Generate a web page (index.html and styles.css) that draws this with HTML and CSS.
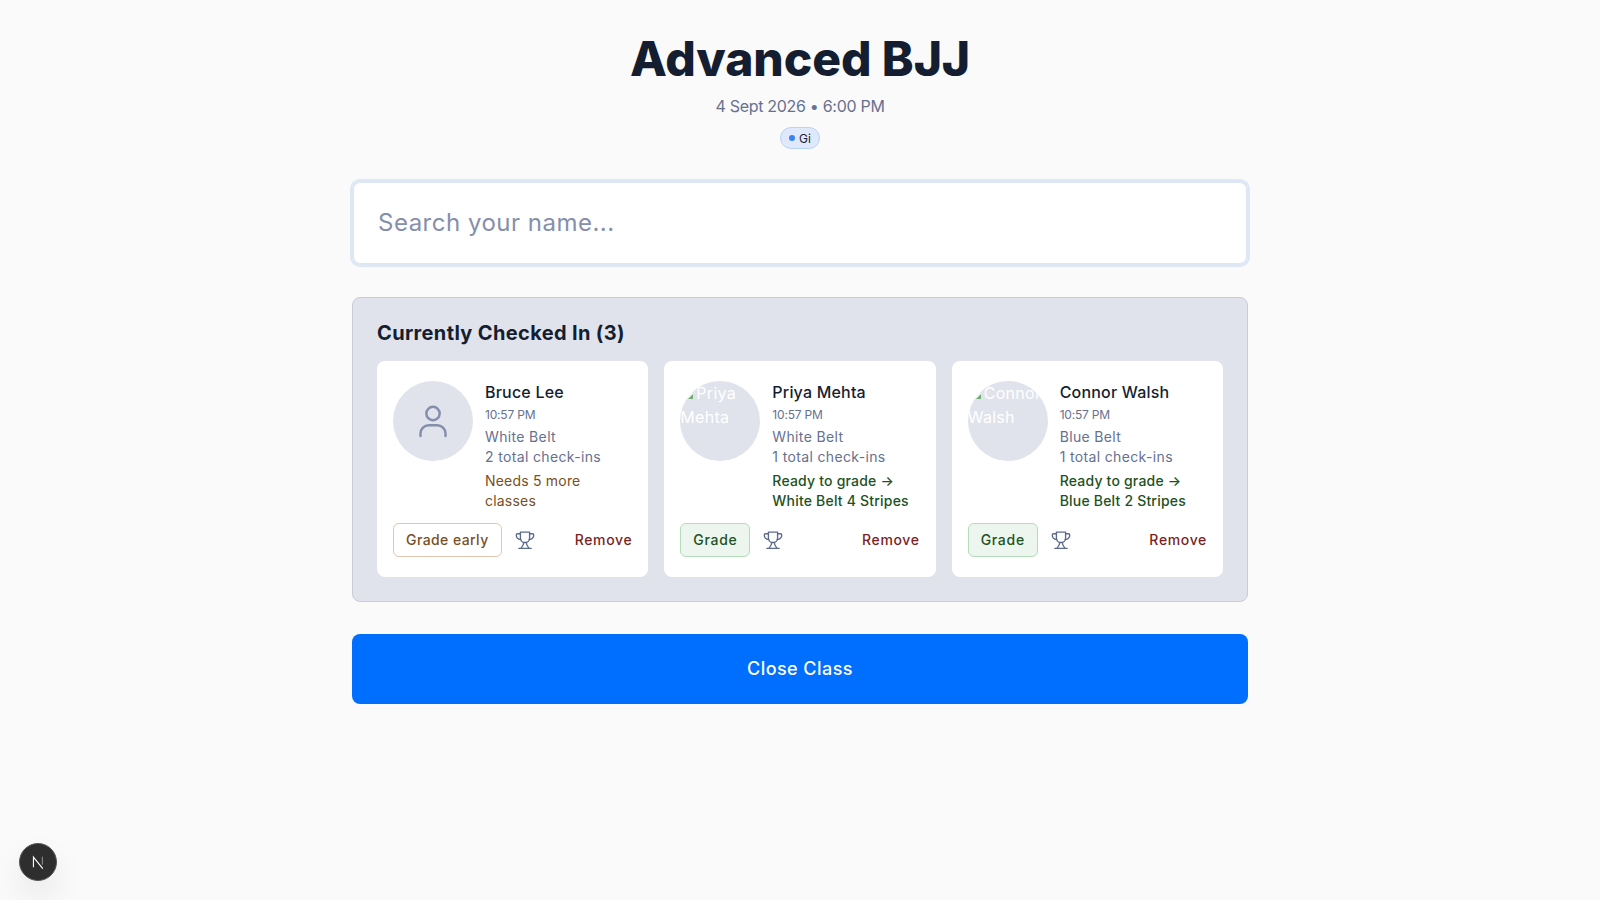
FILE: index.html
```html
<!DOCTYPE html>
<html lang="en">
<head>
<meta charset="utf-8">
<title>Advanced BJJ</title>
<link rel="stylesheet" href="styles.css">
</head>
<body>
<main class="page">
  <header class="head">
    <h1 class="title">Advanced BJJ</h1>
    <p class="sub">4 Sept 2026 • 6:00 PM</p>
    <span class="badge"><i class="dot"></i>Gi</span>
  </header>
  <input class="search" type="text" placeholder="Search your name...">
  <section class="panel">
    <h2 class="panel-title">Currently Checked In (3)</h2>
    <div class="cards">
      <article class="card">
        <div class="top">
          <div class="avatar">
            <svg class="person" viewBox="0 0 24 24" fill="none" stroke="currentColor" stroke-width="1.5" stroke-linecap="round"><circle cx="12" cy="7.5" r="4"/><path d="M4.500 21v-1.500a5 5 0 0 1 5-5h5a5 5 0 0 1 5 5V21"/></svg>
          </div>
          <div class="info">
            <div class="name">Bruce Lee</div>
            <div class="time">10:57 PM</div>
            <div class="meta">White Belt</div>
            <div class="meta">2 total check-ins</div>
            <div class="status needs">Needs 5 more<br>classes</div>
          </div>
        </div>
        <div class="actions">
          <button class="grade early">Grade early</button>
          <svg class="trophy" viewBox="0 0 24 24" fill="none" stroke="currentColor" stroke-width="1.6" stroke-linecap="round" stroke-linejoin="round"><path d="M6.500 2.500h11v7a5.500 5.500 0 0 1-11 0v-7Z"/><path d="M6.500 4.500H3a1.500 1.500 0 0 0-1.500 1.500c0 3 2 5 5.500 5.500M17.500 4.500H21a1.500 1.500 0 0 1 1.500 1.500c0 3-2 5-5.500 5.500"/><path d="M10.500 15c0 2.500-1.500 4.500-3 6.500M13.500 15c0 2.500 1.500 4.500 3 6.500M4.500 22h15"/></svg>
          <button class="remove">Remove</button>
        </div>
      </article>
      <article class="card">
        <div class="top">
          <div class="avatar alt"><svg class="broken" viewBox="0 0 16 16"><path d="M3 3h10v10H3Z" fill="#f4f5f7"/><path d="M13 8v5H8Z" fill="#6fae6f"/></svg>Priya Mehta</div>
          <div class="info">
            <div class="name">Priya Mehta</div>
            <div class="time">10:57 PM</div>
            <div class="meta">White Belt</div>
            <div class="meta">1 total check-ins</div>
            <div class="status ready">Ready to grade →<br>White Belt 4 Stripes</div>
          </div>
        </div>
        <div class="actions">
          <button class="grade">Grade</button>
          <svg class="trophy" viewBox="0 0 24 24" fill="none" stroke="currentColor" stroke-width="1.6" stroke-linecap="round" stroke-linejoin="round"><path d="M6.500 2.500h11v7a5.500 5.500 0 0 1-11 0v-7Z"/><path d="M6.500 4.500H3a1.500 1.500 0 0 0-1.500 1.500c0 3 2 5 5.500 5.500M17.500 4.500H21a1.500 1.500 0 0 1 1.500 1.500c0 3-2 5-5.500 5.500"/><path d="M10.500 15c0 2.500-1.500 4.500-3 6.500M13.500 15c0 2.500 1.500 4.500 3 6.500M4.500 22h15"/></svg>
          <button class="remove">Remove</button>
        </div>
      </article>
      <article class="card">
        <div class="top">
          <div class="avatar alt"><svg class="broken" viewBox="0 0 16 16"><path d="M3 3h10v10H3Z" fill="#f4f5f7"/><path d="M13 8v5H8Z" fill="#6fae6f"/></svg>Connor Walsh</div>
          <div class="info">
            <div class="name">Connor Walsh</div>
            <div class="time">10:57 PM</div>
            <div class="meta">Blue Belt</div>
            <div class="meta">1 total check-ins</div>
            <div class="status ready">Ready to grade →<br>Blue Belt 2 Stripes</div>
          </div>
        </div>
        <div class="actions">
          <button class="grade">Grade</button>
          <svg class="trophy" viewBox="0 0 24 24" fill="none" stroke="currentColor" stroke-width="1.6" stroke-linecap="round" stroke-linejoin="round"><path d="M6.500 2.500h11v7a5.500 5.500 0 0 1-11 0v-7Z"/><path d="M6.500 4.500H3a1.500 1.500 0 0 0-1.500 1.500c0 3 2 5 5.500 5.500M17.500 4.500H21a1.500 1.500 0 0 1 1.500 1.500c0 3-2 5-5.500 5.500"/><path d="M10.500 15c0 2.500-1.500 4.500-3 6.500M13.500 15c0 2.500 1.500 4.500 3 6.500M4.500 22h15"/></svg>
          <button class="remove">Remove</button>
        </div>
      </article>
    </div>
  </section>
  <button class="close">Close Class</button>
</main>
<div class="dev"><svg viewBox="0 0 16 16" fill="none" stroke-width="1.300"><path d="M2.800 14V2.500L13.500 15.500" stroke="#fff"/><path d="M13 2v9" stroke="#8a8a8a"/></svg></div>
</body>
</html>
```
FILE: styles.css
```css
* { box-sizing: border-box; }
html, body { margin: 0; height: 100%; }
body {
  background: #fafafa;
  color: #141e30;
  font-family: "Inter", "Noto Sans", "Liberation Sans", sans-serif;
}
.page {
  width: 896px;
  margin: 0 auto;
  padding-top: 31px;
  display: flex;
  flex-direction: column;
}
.head {
  display: flex;
  flex-direction: column;
  align-items: center;
  height: 150px;
}
.title {
  margin: 0;
  font-size: 48px;
  line-height: 56px;
  font-weight: 800;
  letter-spacing: -0.1px;
  color: #141e30;
}
.sub {
  margin: 7px 0 0;
  font-size: 16px;
  line-height: 24px;
  letter-spacing: -0.3px;
  color: #667190;
}
.badge {
  margin-top: 9px;
  height: 22px;
  padding: 0 8px;
  display: inline-flex;
  align-items: center;
  gap: 4px;
  border: 1px solid #b9d2f7;
  border-radius: 11px;
  background: #dfe9fb;
  font-size: 12px;
  color: #141e30;
}
.dot {
  width: 6px;
  height: 6px;
  border-radius: 50%;
  background: #3b82f6;
}
.search {
  width: 100%;
  height: 84px;
  padding: 0 24px 2px;
  border: 2px solid #dde6f2;
  border-radius: 8px;
  outline: 2px solid #dde8f7;
  background: #fff;
  font: 400 24px "Inter", sans-serif;
  letter-spacing: 0.5px;
  color: #141e30;
}
.search::placeholder { color: #858fab; opacity: 1; }
.panel {
  margin-top: 32px;
  height: 305px;
  padding: 23px 24px 24px;
  border: 1px solid #c8ccd6;
  border-radius: 8px;
  background: #e0e3eb;
}
.panel-title {
  margin: 0 0 16px;
  font-size: 20px;
  line-height: 24px;
  font-weight: 700;
  letter-spacing: 0.35px;
}
.cards {
  display: grid;
  grid-template-columns: repeat(3, 1fr);
  gap: 16px;
}
.card {
  height: 216px;
  padding: 20px 16px 0;
  background: #fff;
  border-radius: 8px;
  display: flex;
  flex-direction: column;
}
.top {
  display: flex;
  gap: 12px;
  height: 142px;
}
.avatar {
  flex: none;
  width: 80px;
  height: 80px;
  border-radius: 50%;
  background: #e0e3eb;
  color: #858fab;
  display: flex;
  align-items: center;
  justify-content: center;
  overflow: hidden;
}
.avatar.alt {
  display: block;
  color: #fff;
  font-size: 16px;
  line-height: 24px;
  letter-spacing: 0.3px;
}
.person { width: 40px; height: 40px; }
.broken { width: 16px; height: 16px; margin-top: -2px; vertical-align: middle; }
.info { min-width: 0; flex: 1; padding-top: 1px; }
.name {
  font-size: 16px;
  line-height: 20px;
  font-weight: 500;
  letter-spacing: 0.2px;
}
.time {
  margin-top: 4px;
  font-size: 12px;
  line-height: 18px;
  letter-spacing: -0.2px;
  color: #667190;
}
.meta {
  font-size: 14px;
  line-height: 20px;
  letter-spacing: 0.35px;
  color: #667190;
}
.time + .meta { margin-top: 3px; }
.status {
  margin-top: 4px;
  font-size: 14px;
  line-height: 20px;
  letter-spacing: 0.2px;
}
.needs { color: #7a4f24; }
.ready { color: #1d5223; font-weight: 500; }
.actions {
  display: flex;
  align-items: center;
  height: 34px;
}
.grade {
  height: 34px;
  padding: 0 12px 2px;
  border: 1px solid #b5dcb9;
  border-radius: 6px;
  background: #ecf6ee;
  color: #1d5223;
  font: 500 14px "Inter", sans-serif;
  letter-spacing: 0.7px;
}
.grade.early {
  border-color: #e0c6ac;
  background: #fff;
  color: #7a4f24;
  letter-spacing: 0.42px;
}
.trophy {
  width: 20px;
  height: 20px;
  margin-left: 13px;
  color: #5c6a8c;
}
.remove {
  margin-left: auto;
  padding: 0 0 2px;
  border: 0;
  background: none;
  color: #7a1f1f;
  font: 500 14px "Inter", sans-serif;
  letter-spacing: 0.65px;
}
.close {
  margin-top: 32px;
  height: 70px;
  padding: 0 0 2px;
  border: 0;
  border-radius: 8px;
  background: #006efe;
  color: #fff;
  font: 500 18px "Inter", sans-serif;
  letter-spacing: 0.45px;
}
.dev {
  position: fixed;
  left: 19px;
  top: 843px;
  width: 38px;
  height: 38px;
  border-radius: 50%;
  background: #2e2e2e;
  border: 1px solid #555;
  box-shadow: 0 16px 32px rgba(0,0,0,0.08);
  display: flex;
  align-items: center;
  justify-content: center;
}
.dev svg { width: 14px; height: 14px; }
```
